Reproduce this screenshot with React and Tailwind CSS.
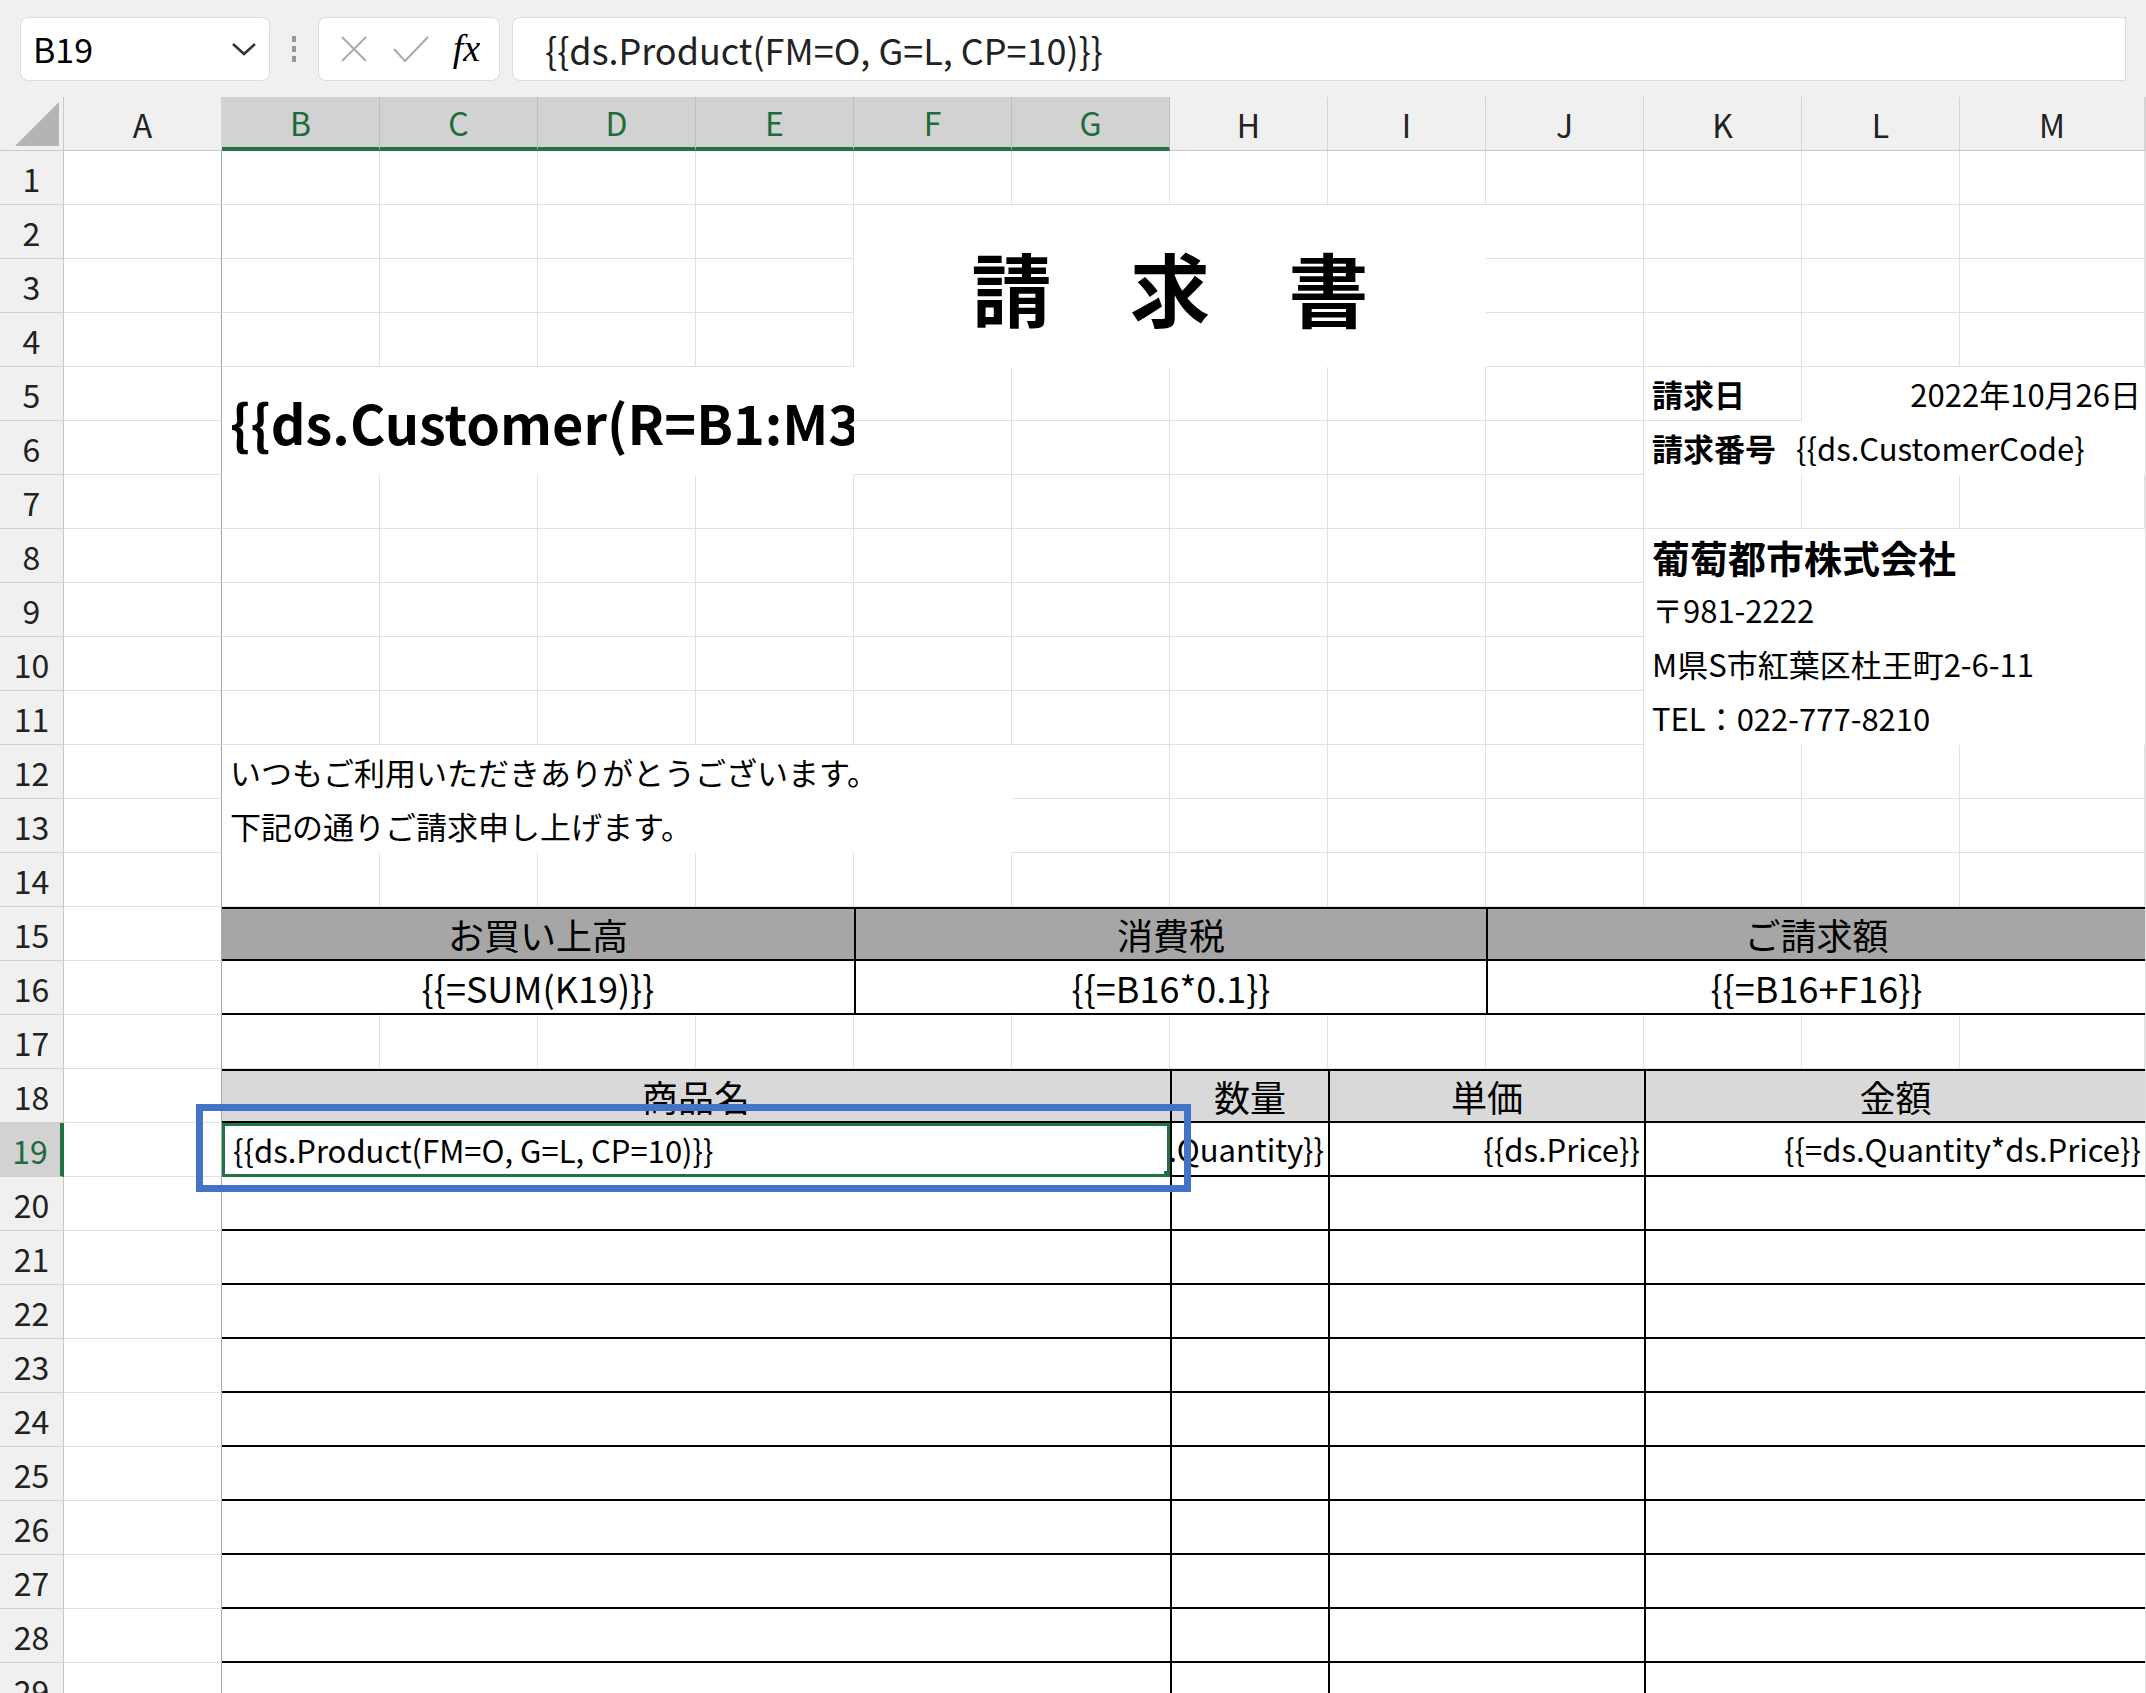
import React from "react";

const FONT = { fontFamily: '"Noto Sans CJK JP", "Noto Sans", sans-serif' };
const COLS = ["A", "B", "C", "D", "E", "F", "G", "H", "I", "J", "K", "L", "M", ""];
const ROWS = Array.from({ length: 29 }, (_, i) => i + 1);

// c = column number (A=1), r = sheet row; grid col/row offset by one for the headers
function Cell({ c, r, cs = 1, rs = 1, className = "", children }) {
  return (
    <div
      className={"flex items-center overflow-hidden whitespace-nowrap " + className}
      style={{ gridColumn: `${c + 1} / span ${cs}`, gridRow: `${r + 1} / span ${rs}` }}
    >
      {children}
    </div>
  );
}

export default function App() {
  return (
    <div className="w-[2146px] h-[1693px] overflow-hidden bg-white text-black" style={FONT}>
      {/* formula bar */}
      <div className="h-[97px] bg-[#f0f0f0] flex items-center gap-3 px-5">
        <div className="w-[250px] h-[64px] bg-white rounded-lg border border-[#dcdcdc] flex items-center justify-between px-3 text-[34px]">
          <span>B19</span>
          <svg width="26" height="16" viewBox="0 0 26 16"><path d="M2 3 L13 13 L24 3" fill="none" stroke="#333" strokeWidth="2.5" /></svg>
        </div>
        <div className="w-[24px] flex flex-col items-center gap-1">
          <span className="w-[4px] h-[6px] bg-[#999]" />
          <span className="w-[4px] h-[6px] bg-[#999]" />
          <span className="w-[4px] h-[6px] bg-[#999]" />
        </div>
        <div className="w-[182px] h-[64px] bg-white rounded-lg border border-[#dcdcdc] flex items-center justify-around px-2">
          <svg width="32" height="32" viewBox="0 0 32 32"><path d="M4 4 L28 28 M28 4 L4 28" stroke="#aaa" strokeWidth="2" /></svg>
          <svg width="40" height="32" viewBox="0 0 40 32"><path d="M3 16 L14 28 L37 4" fill="none" stroke="#aaa" strokeWidth="2" /></svg>
          <span className="text-[38px] italic" style={{ fontFamily: '"Liberation Serif", serif' }}>fx</span>
        </div>
        <div className="flex-1 h-[64px] bg-white rounded-l-lg border border-[#dcdcdc] flex items-center px-8 text-[36px] text-[#222]">
          {"{{ds.Product(FM=O, G=L, CP=10)}}"}
        </div>
      </div>

      {/* sheet */}
      <div className="relative grid grid-cols-[64px_repeat(12,158px)_1fr] grid-rows-[54px_repeat(29,54px)]">
        <div className="bg-[#f0f0f0] border-b border-r border-[#c8c8c8] flex items-end justify-end p-1" style={{ gridColumn: "1", gridRow: "1" }}>
          <svg width="44" height="44" viewBox="0 0 44 44"><path d="M44 0 L44 44 L0 44 Z" fill="#b4b4b4" /></svg>
        </div>
        {COLS.map((l, i) => {
          const sel = i >= 1 && i <= 6;
          return (
            <div
              key={"c" + i}
              className={
                "flex items-center justify-center text-[32px] border-r " +
                (sel ? "bg-[#d2d2d2] text-[#1e6b3c] border-[#bdbdbd] border-b-[4px] border-b-[#217346]" : "bg-[#f0f0f0] text-[#222] border-[#d4d4d4] border-b border-b-[#c8c8c8]")
              }
              style={{ gridColumn: `${i + 2}`, gridRow: "1" }}
            >
              {l}
            </div>
          );
        })}
        {ROWS.map((r) => (
          <div
            key={"h" + r}
            className={
              "flex items-center justify-center text-[32px] border-b border-[#d0d0d0] " +
              (r === 19 ? "bg-[#d2d2d2] text-[#1e6b3c] border-r-[4px] border-r-[#217346]" : "bg-[#f0f0f0] text-[#222] border-r border-r-[#c8c8c8]")
            }
            style={{ gridColumn: "1", gridRow: `${r + 1}` }}
          >
            {r}
          </div>
        ))}
        {ROWS.map((r) =>
          COLS.map((l, i) => (
            <div
              key={i + "-" + r}
              className={"border-r border-b border-[#e1e1e1] " + (i === 0 ? "border-r-[#a8a8a8]" : "")}
              style={{ gridColumn: `${i + 2}`, gridRow: `${r + 1}` }}
            />
          ))
        )}

        <Cell c={6} r={2} cs={4} rs={3} className="bg-white justify-center text-[80px] font-bold tracking-[0.98em] pl-[0.98em]">請求書</Cell>
        <Cell c={2} r={5} cs={4} rs={2} className="bg-white pl-2 text-[54px] font-bold">{"{{ds.Customer(R=B1:M3"}</Cell>

        <Cell c={11} r={5} className="pl-2 text-[31px] font-bold">請求日</Cell>
        <Cell c={12} r={5} cs={2} className="bg-white justify-end pr-1 text-[31px]">2022年10月26日</Cell>
        <Cell c={11} r={6} cs={3} className="bg-white pl-2 text-[31px]">
          <span className="font-bold">請求番号</span>
          <span className="ml-5">{"{{ds.CustomerCode}"}</span>
        </Cell>
        <Cell c={11} r={8} cs={3} className="bg-white pl-2 text-[38px] font-bold">葡萄都市株式会社</Cell>
        <Cell c={11} r={9} cs={3} className="bg-white pl-2 text-[31px]">〒981-2222</Cell>
        <Cell c={11} r={10} cs={3} className="bg-white pl-2 text-[31px]">M県S市紅葉区杜王町2-6-11</Cell>
        <Cell c={11} r={11} cs={3} className="bg-white pl-2 text-[31px]">TEL：022-777-8210</Cell>

        <Cell c={2} r={12} cs={5} className="bg-white pl-2 text-[31px]">いつもご利用いただきありがとうございます。</Cell>
        <Cell c={2} r={13} cs={5} className="bg-white pl-2 text-[31px]">下記の通りご請求申し上げます。</Cell>

        {[["お買い上高", "{{=SUM(K19)}}"], ["消費税", "{{=B16*0.1}}"], ["ご請求額", "{{=B16+F16}}"]].map(([h, v], i) => (
          <React.Fragment key={h}>
            <Cell c={2 + i * 4} r={15} cs={4} className={"bg-[#a6a6a6] justify-center text-[36px] border-t-2 border-b-2 border-black " + (i > 0 ? "border-l-2" : "")}>{h}</Cell>
            <Cell c={2 + i * 4} r={16} cs={4} className={"bg-white justify-center text-[36px] border-b-2 border-black " + (i > 0 ? "border-l-2" : "")}>{v}</Cell>
          </React.Fragment>
        ))}

        {[[2, 6, "商品名"], [8, 1, "数量"], [9, 2, "単価"], [11, 3, "金額"]].map(([c, cs, h], i) => (
          <Cell key={h} c={c} r={18} cs={cs} className={"bg-[#d9d9d9] justify-center text-[36px] border-t-2 border-b-2 border-black " + (i > 0 ? "border-l-2" : "")}>{h}</Cell>
        ))}
        {ROWS.filter((r) => r >= 19).map((r) =>
          [[2, 6], [8, 1], [9, 2], [11, 3]].map(([c, cs], i) => (
            <Cell key={r + "-" + c} c={c} r={r} cs={cs} className={"bg-white justify-end pr-1 text-[31px] border-b-2 border-black " + (i > 0 ? "border-l-2" : "")}>
              {r === 19 && i === 1 && <span className="shrink-0">{"{{ds.Quantity}}"}</span>}
              {r === 19 && i === 2 && <span className="shrink-0">{"{{ds.Price}}"}</span>}
              {r === 19 && i === 3 && <span className="shrink-0">{"{{=ds.Quantity*ds.Price}}"}</span>}
            </Cell>
          ))
        )}
        <Cell c={2} r={19} cs={6} className="relative bg-white pl-2 text-[31px] border-[3px] border-[#217346]">
          {"{{ds.Product(FM=O, G=L, CP=10)}}"}
          <span className="absolute right-[-5px] bottom-[-5px] w-[9px] h-[9px] bg-[#217346] border border-white" />
        </Cell>

        {/* annotation */}
        <div className="absolute left-[196px] top-[1007px] w-[995px] h-[88px] border-[7px] border-[#4472c4] pointer-events-none" />
      </div>
    </div>
  );
}
